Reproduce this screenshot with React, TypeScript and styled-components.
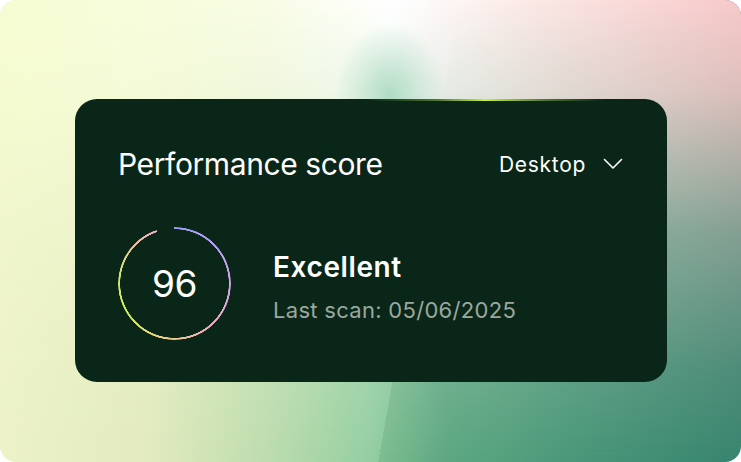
import styled, { createGlobalStyle } from 'styled-components';

const GlobalStyle = createGlobalStyle`
  html, body {
    margin: 0;
    padding: 0;
    background: #ffffff;
  }
  body {
    font-family: Inter, "Noto Sans", sans-serif;
  }
`;

const Stage = styled.div`
  position: relative;
  width: 741px;
  height: 462px;
  box-sizing: border-box;
  padding: 99px 74px 80px 75px;
  border-radius: 16px;
  overflow: hidden;
  isolation: isolate;
  background:
    linear-gradient(100deg, rgba(255, 255, 255, 0.07) 0 55.9%, rgba(0, 60, 30, 0.07) 55.9% 100%),
    linear-gradient(90deg, #ecf1c4 0%, #e0e9ba 20%, #b8daa8 36%, #8ccb9a 50%, #64b08a 60%, #4e9e80 78%, #3b8a75 100%);

  &::before {
    content: '';
    position: absolute;
    inset: 0;
    z-index: -1;
    background: linear-gradient(90deg, #f6fcd2 0%, #f8fce4 35%, #ffffff 53%, #fbe8e6 72%, #f8c9c9 100%);
    -webkit-mask-image: linear-gradient(180deg, #000 0%, rgba(0, 0, 0, 0.85) 20%, rgba(0, 0, 0, 0.4) 50%, rgba(0, 0, 0, 0.12) 80%, transparent 100%);
    mask-image: linear-gradient(180deg, #000 0%, rgba(0, 0, 0, 0.85) 20%, rgba(0, 0, 0, 0.4) 50%, rgba(0, 0, 0, 0.12) 80%, transparent 100%);
  }

  &::after {
    content: '';
    position: absolute;
    left: 335px;
    top: 25px;
    width: 110px;
    height: 100px;
    z-index: -1;
    background: radial-gradient(ellipse at 50% 70%, rgba(160, 214, 186, 0.8) 0%, rgba(170, 215, 190, 0.3) 45%, transparent 72%);
  }
`;

const Card = styled.section`
  position: relative;
  height: 100%;
  box-sizing: border-box;
  padding: 46px 44px 42px 43px;
  border-radius: 22px;
  background: #0a2618;
  color: #ffffff;
  display: flex;
  flex-direction: column;
  justify-content: space-between;

  &::before {
    content: '';
    position: absolute;
    top: 0;
    left: 290px;
    width: 240px;
    height: 2px;
    background: linear-gradient(90deg, transparent 0%, rgba(150, 200, 80, 0.5) 30%, #c6f33e 50%, rgba(150, 200, 80, 0.5) 75%, transparent 100%);
    filter: blur(0.5px);
  }
`;

const Header = styled.div`
  display: flex;
  align-items: center;
  justify-content: space-between;
`;

const Title = styled.h2`
  margin: 0;
  font-size: 30px;
  font-weight: 400;
  letter-spacing: -0.4px;
  line-height: 38px;
`;

const Select = styled.button`
  display: flex;
  align-items: center;
  gap: 17px;
  padding: 0;
  border: 0;
  background: none;
  color: #ffffff;
  font-family: inherit;
  font-size: 21px;
  letter-spacing: 0.7px;
  cursor: pointer;
`;

const Body = styled.div`
  display: flex;
  align-items: center;
  gap: 42px;
`;

const Ring = styled.div`
  position: relative;
  width: 113px;
  height: 113px;
  display: flex;
  align-items: center;
  justify-content: center;

  &::before {
    content: '';
    position: absolute;
    inset: 0;
    border-radius: 50%;
    background: conic-gradient(
      from 0deg,
      #9d9cf6 0deg,
      #b7a2f0 50deg,
      #e0a4e6 100deg,
      #f1b3b4 150deg,
      #f0cf86 190deg,
      #cdee58 240deg,
      #d8e27a 285deg,
      #efbfa6 318deg,
      #f2b0c8 341deg,
      transparent 342deg
    );
    -webkit-mask-image: radial-gradient(circle closest-side, transparent calc(100% - 2.4px), #000 calc(100% - 2px), #000 100%, transparent 100%);
    mask-image: radial-gradient(circle closest-side, transparent calc(100% - 2.4px), #000 calc(100% - 2px), #000 100%, transparent 100%);
  }
`;

const Score = styled.span`
  font-size: 37px;
  font-weight: 400;
  letter-spacing: -0.5px;
`;

const Info = styled.div`
  display: flex;
  flex-direction: column;
  gap: 12px;
  padding-top: 6px;
`;

const Rating = styled.div`
  font-size: 28px;
  font-weight: 600;
  letter-spacing: 0.6px;
  line-height: 34px;
`;

const Meta = styled.div`
  font-size: 22px;
  color: #9aa89f;
  letter-spacing: 0.3px;
  line-height: 28px;
`;

function Chevron() {
  return (
    <svg width="20" height="12" viewBox="0 0 20 12" fill="none">
      <path d="M1.5 1.5 L10 10 L18.5 1.5" stroke="#ffffff" strokeWidth="1.6" strokeLinecap="round" strokeLinejoin="round" />
    </svg>
  );
}

function App() {
  return (
    <>
      <GlobalStyle />
      <Stage>
        <Card>
          <Header>
            <Title>Performance score</Title>
            <Select>
              Desktop
              <Chevron />
            </Select>
          </Header>
          <Body>
            <Ring>
              <Score>96</Score>
            </Ring>
            <Info>
              <Rating>Excellent</Rating>
              <Meta>Last scan: 05/06/2025</Meta>
            </Info>
          </Body>
        </Card>
      </Stage>
    </>
  );
}

export default App;
